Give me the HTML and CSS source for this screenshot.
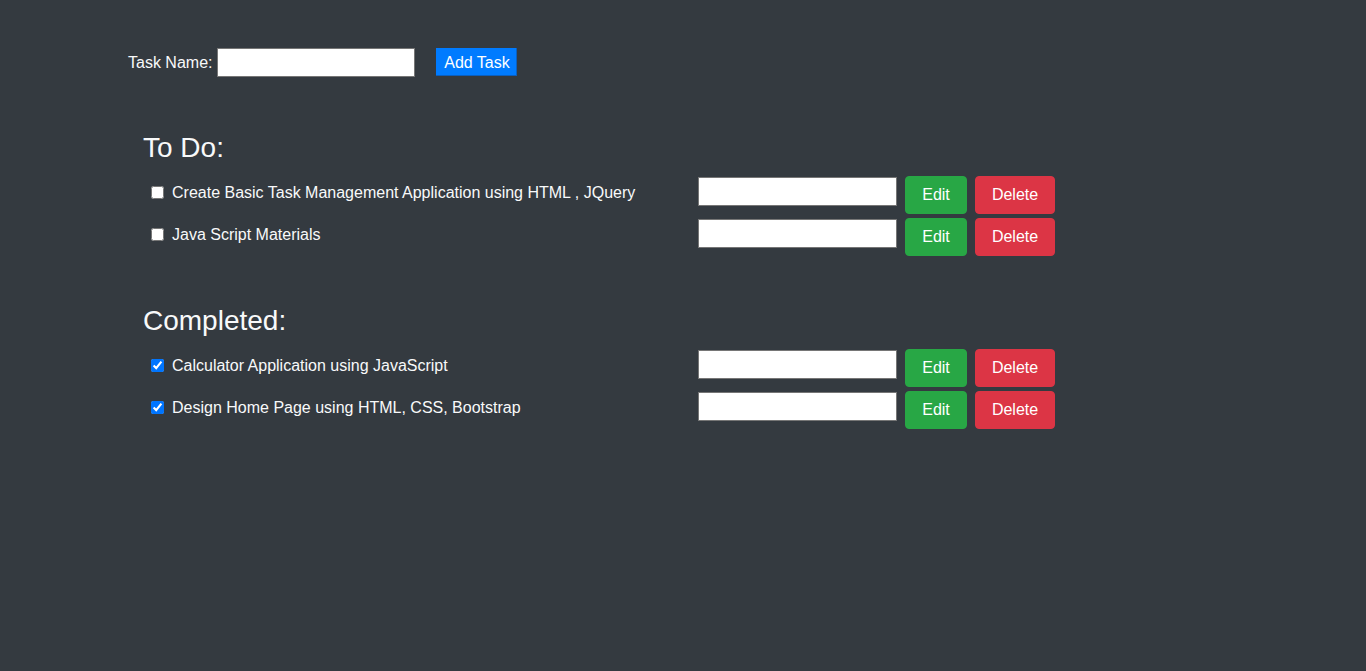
FILE: index.html
```html
<!DOCTYPE html>
<html lang="en">
<head>
<meta charset="utf-8">
<title>Task Manager</title>
<link rel="stylesheet" href="styles.css">
</head>
<body>
<div class="app">
  <div class="add-row">
    <label class="add-label" for="newTask">Task Name:</label>
    <input class="add-input" id="newTask" type="text">
    <button class="add-btn">Add Task</button>
  </div>

  <section class="section todo">
    <h3 class="section-title">To Do:</h3>
    <ul class="task-list">
      <li class="task">
        <input class="task-check" type="checkbox">
        <span class="task-label">Create Basic Task Management Application using HTML , JQuery</span>
        <input class="task-edit" type="text">
        <button class="btn btn-edit">Edit</button>
        <button class="btn btn-delete">Delete</button>
      </li>
      <li class="task">
        <input class="task-check" type="checkbox">
        <span class="task-label">Java Script Materials</span>
        <input class="task-edit" type="text">
        <button class="btn btn-edit">Edit</button>
        <button class="btn btn-delete">Delete</button>
      </li>
    </ul>
  </section>

  <section class="section completed">
    <h3 class="section-title">Completed:</h3>
    <ul class="task-list">
      <li class="task">
        <input class="task-check" type="checkbox" checked>
        <span class="task-label">Calculator Application using JavaScript</span>
        <input class="task-edit" type="text">
        <button class="btn btn-edit">Edit</button>
        <button class="btn btn-delete">Delete</button>
      </li>
      <li class="task">
        <input class="task-check" type="checkbox" checked>
        <span class="task-label">Design Home Page using HTML, CSS, Bootstrap</span>
        <input class="task-edit" type="text">
        <button class="btn btn-edit">Edit</button>
        <button class="btn btn-delete">Delete</button>
      </li>
    </ul>
  </section>
</div>
</body>
</html>
```

FILE: styles.css
```css
html, body {
  margin: 0;
  padding: 0;
  background: #343a40;
  height: 100%;
}

body {
  font-family: "Liberation Sans", Arial, sans-serif;
  font-size: 16px;
  color: #f8f9fa;
}

.app {
  padding: 48px 0 0 128px;
}

.add-row {
  display: flex;
  align-items: center;
  height: 29px;
}

.add-label {
  margin-right: 5px;
  line-height: 24px;
}

.add-input {
  box-sizing: border-box;
  width: 198px;
  height: 29px;
  margin: 0;
  border: 1px solid #767676;
  background: #fff;
  padding: 1px 2px;
  font: inherit;
}

.add-btn {
  box-sizing: border-box;
  margin: 0 0 1px 21px;
  width: 81px;
  height: 28px;
  border: none;
  border-bottom: 1px solid #0a5fc0;
  border-right: 1px solid #0a5fc0;
  background: #007bff;
  color: #fff;
  font-family: "Liberation Sans", Arial, sans-serif;
  font-size: 16px;
  padding: 2px 0 0 1px;
}

.section {
  margin-left: 15px;
}

.todo {
  margin-top: 54px;
}

.completed {
  margin-top: 48px;
}

.section-title {
  margin: 0 0 11px;
  font-size: 28px;
  font-weight: 400;
  line-height: 1.2;
}

.completed .section-title {
  margin-bottom: 12px;
}

.task-list {
  list-style: none;
  margin: 0;
  padding: 0;
}

.task {
  display: flex;
  align-items: flex-start;
  margin-top: 4px;
  height: 38px;
}

.task:first-child {
  margin-top: 0;
}

.task-check {
  width: 13px;
  height: 13px;
  margin: 10px 0 0 8px;
  flex: none;
}

.task-label {
  margin: 5px 0 0 8px;
  width: 526px;
  flex: none;
  line-height: 24px;
}

.task-edit {
  box-sizing: border-box;
  width: 199px;
  height: 29px;
  margin: 1px 0 0 0;
  flex: none;
  border: 1px solid #767676;
  background: #fff;
  font: inherit;
  padding: 1px 2px;
}

.btn {
  box-sizing: border-box;
  height: 38px;
  border: 1px solid transparent;
  border-radius: 4px;
  color: #fff;
  font-family: "Liberation Sans", Arial, sans-serif;
  font-size: 16px;
  line-height: 24px;
  padding: 6px 0;
  flex: none;
  text-align: center;
}

.btn-edit {
  width: 62px;
  margin-left: 8px;
  background: #28a745;
  border-color: #28a745;
}

.btn-delete {
  width: 80px;
  margin-left: 8px;
  background: #dc3545;
  border-color: #dc3545;
}
```
